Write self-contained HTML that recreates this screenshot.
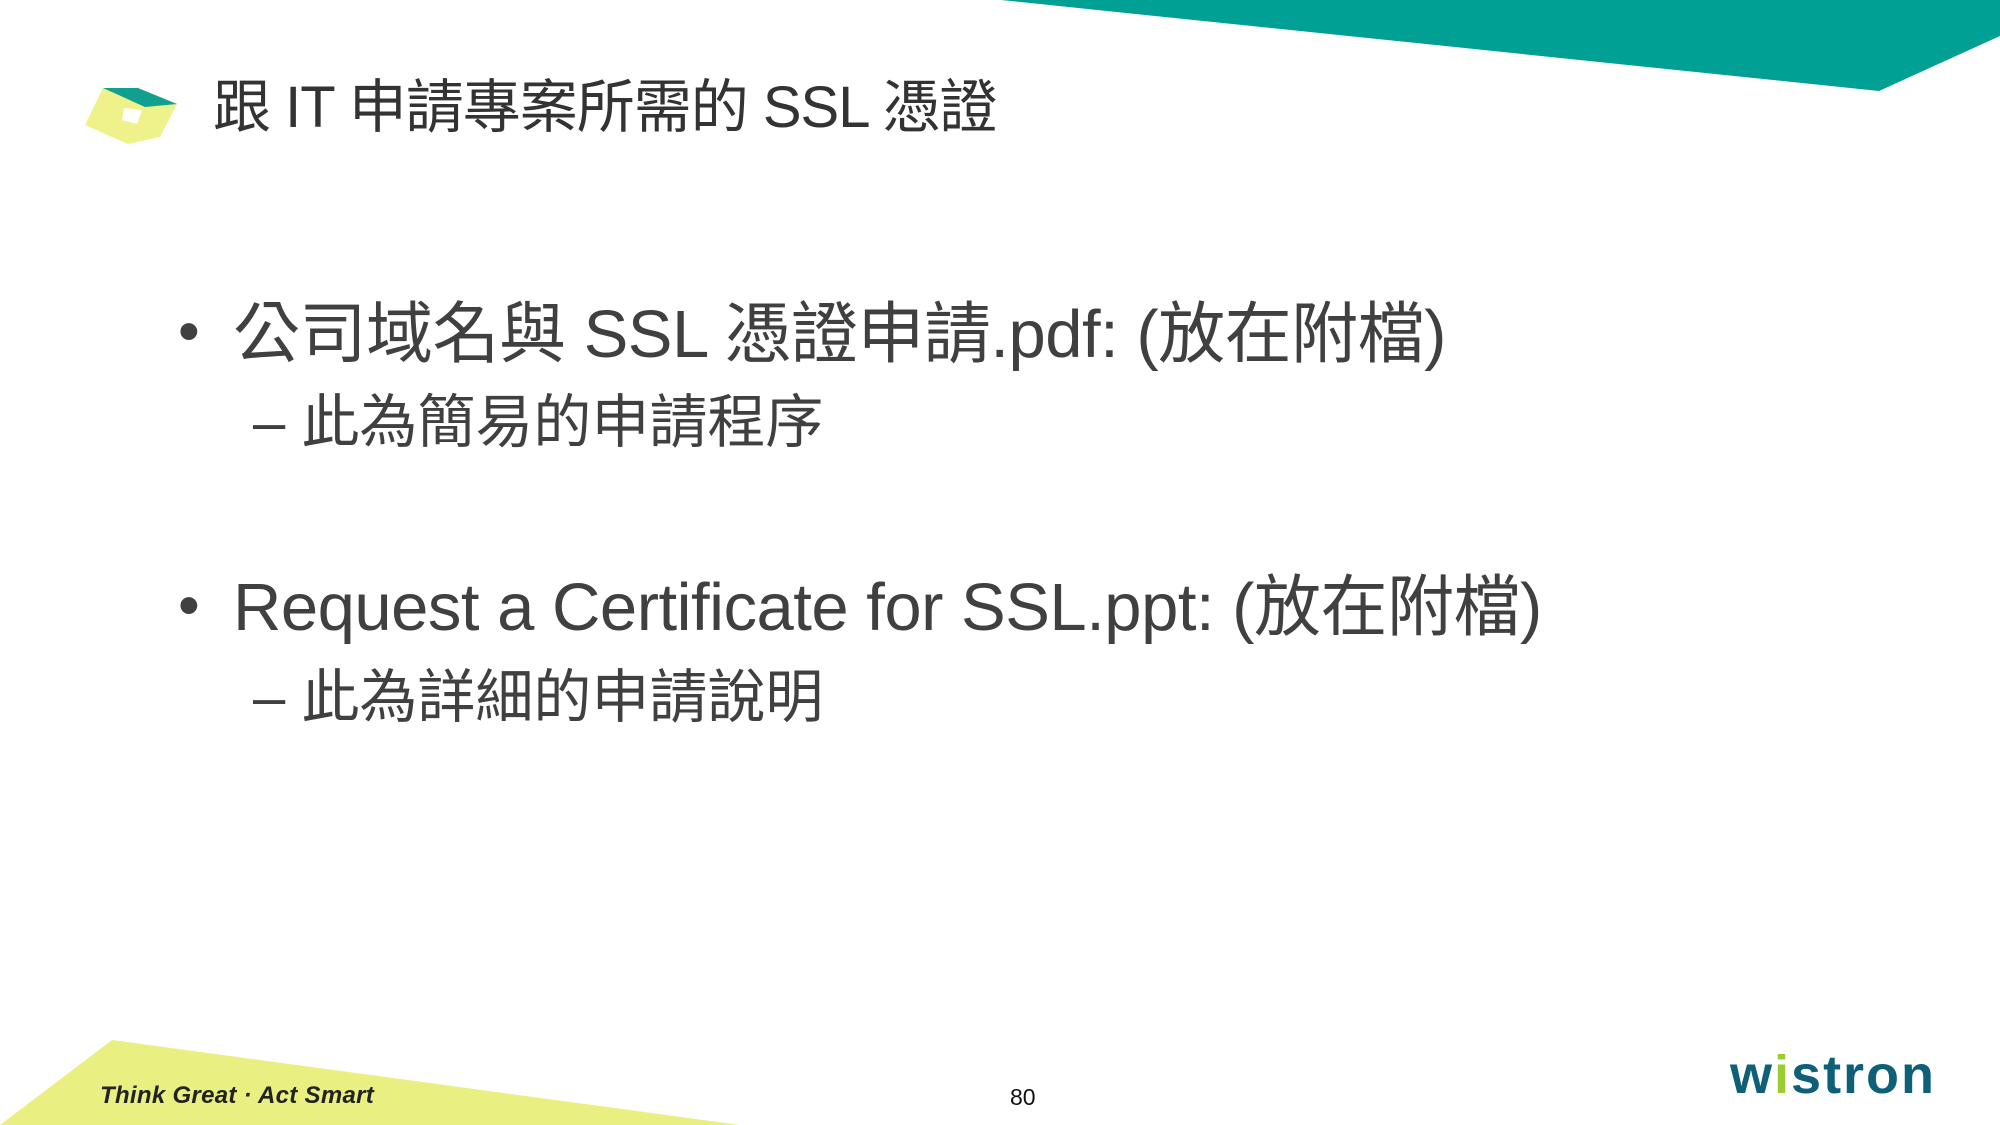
<!DOCTYPE html>
<html><head><meta charset="utf-8"><style>
html,body{margin:0;padding:0}
body{width:2000px;height:1125px;position:relative;overflow:hidden;background:#fff;font-family:"Liberation Sans","Noto Sans CJK TC",sans-serif}
.t{position:absolute;white-space:nowrap}
</style></head><body>
<svg width="2000" height="1125" style="position:absolute;left:0;top:0">
<polygon points="1001,0 2000,0 2000,36 1879,91" fill="#00a095"/>
<polygon points="0,1125 112,1040 740,1125" fill="#eaef82"/>
<polygon points="103,88 85,125 128,144 160,137 177,104 138,88" fill="#eff28a"/>
<polygon points="103,88 138,88 177,104 145,107" fill="#11a090"/>
<polygon points="124,108 142,110 137,124 122,120" fill="#fff"/>
</svg>
<div class="t" style="left:213px;top:60px;font-size:58px;color:#333;letter-spacing:-1px">跟 IT 申請專案所需的 SSL 憑證</div>
<div class="t" style="left:178px;top:296px;font-size:62px;color:#404040">•</div>
<div class="t" style="left:233px;top:280px;font-size:67px;color:#404040;letter-spacing:-0.5px">公司域名與 SSL 憑證申請.pdf: (放在附檔)</div>
<div class="t" style="left:253px;top:375px;font-size:58px;color:#404040">– 此為簡易的申請程序</div>
<div class="t" style="left:178px;top:570px;font-size:62px;color:#404040">•</div>
<div class="t" style="left:233px;top:553px;font-size:67px;color:#404040;letter-spacing:-0.5px">Request a Certificate for SSL.ppt: (放在附檔)</div>
<div class="t" style="left:253px;top:650px;font-size:58px;color:#404040">– 此為詳細的申請說明</div>
<div class="t" style="left:100px;top:1082px;font-size:24px;font-style:italic;font-weight:bold;color:#222;letter-spacing:0.3px">Think Great · Act Smart</div>
<div class="t" style="left:1010px;top:1084px;font-size:23px;color:#111">80</div>
<div class="t" style="left:1730px;top:1044px;font-size:54px;font-weight:bold;color:#0e5f78;letter-spacing:2px">w<span style="color:#9acd32">i</span>stron</div>
</body></html>
